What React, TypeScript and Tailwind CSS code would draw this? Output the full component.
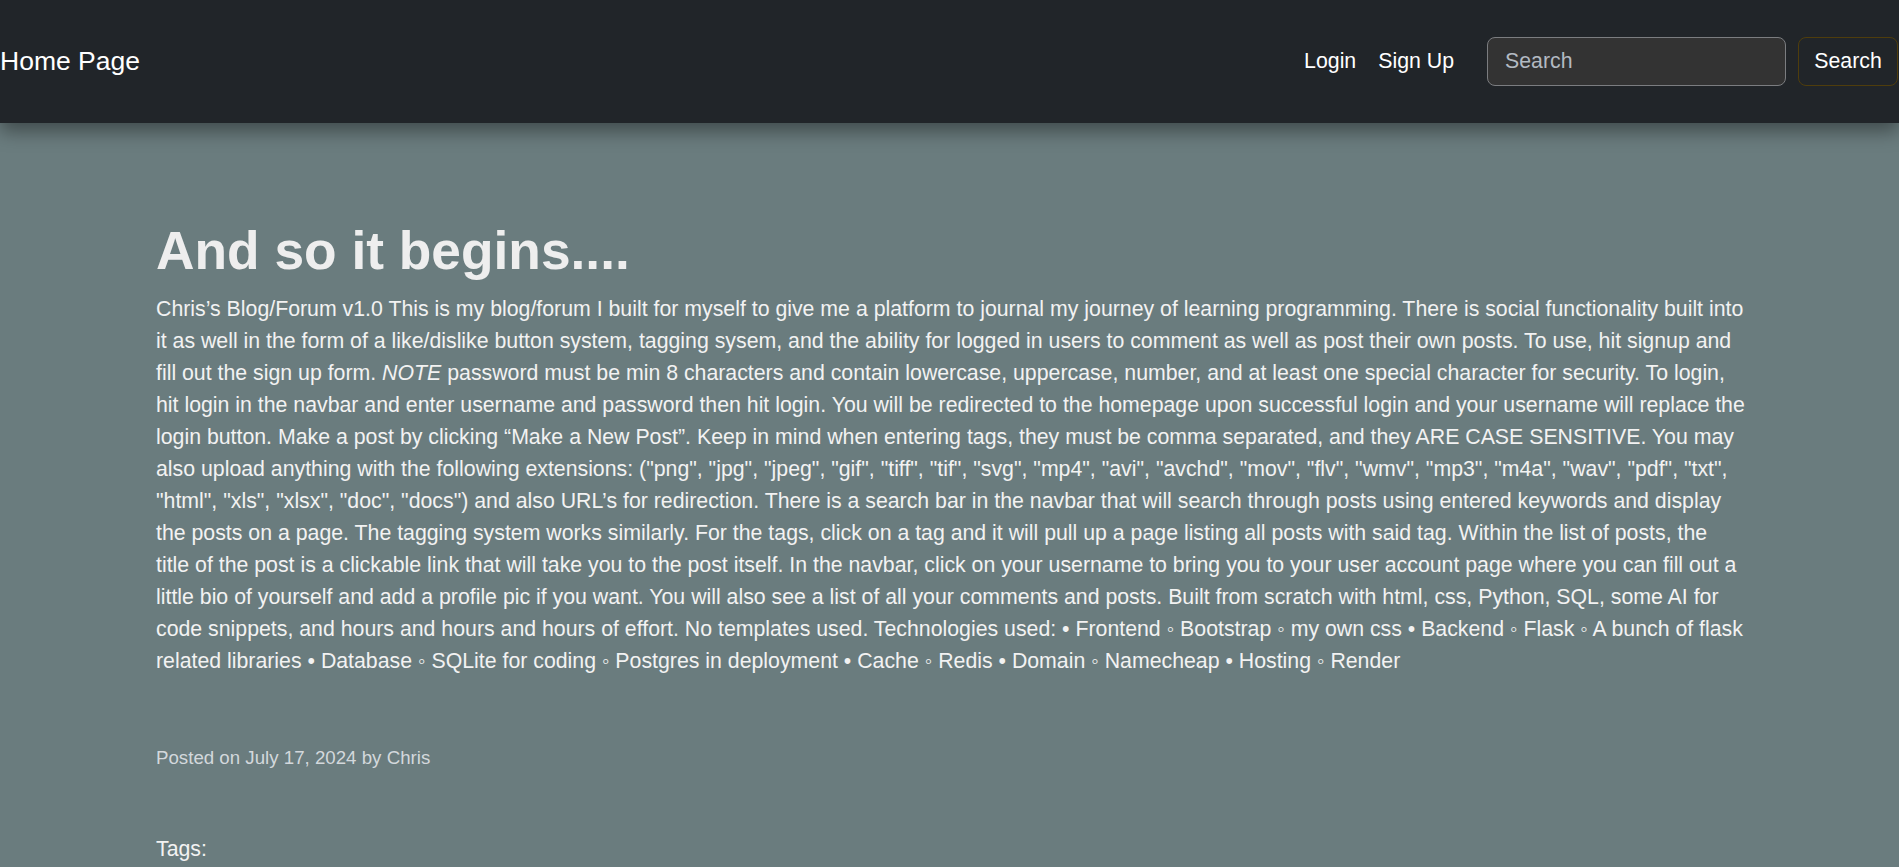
import React from 'react';

const body =
  'password must be min 8 characters and contain lowercase, uppercase, number, and at least one special character for security. To login, hit login in the navbar and enter username and password then hit login. You will be redirected to the homepage upon successful login and your username will replace the login button. Make a post by clicking “Make a New Post”. Keep in mind when entering tags, they must be comma separated, and they ARE CASE SENSITIVE. You may also upload anything with the following extensions: ("png", "jpg", "jpeg", "gif", "tiff", "tif", "svg", "mp4", "avi", "avchd", "mov", "flv", "wmv", "mp3", "m4a", "wav", "pdf", "txt", "html", "xls", "xlsx", "doc", "docs") and also URL’s for redirection. There is a search bar in the navbar that will search through posts using entered keywords and display the posts on a page. The tagging system works similarly. For the tags, click on a tag and it will pull up a page listing all posts with said tag. Within the list of posts, the title of the post is a clickable link that will take you to the post itself. In the navbar, click on your username to bring you to your user account page where you can fill out a little bio of yourself and add a profile pic if you want. You will also see a list of all your comments and posts. Built from scratch with html, css, Python, SQL, some AI for code snippets, and hours and hours and hours of effort. No templates used. Technologies used: • Frontend ◦ Bootstrap ◦ my own css • Backend ◦ Flask ◦ A bunch of flask related libraries • Database ◦ SQLite for coding ◦ Postgres in deployment • Cache ◦ Redis • Domain ◦ Namecheap • Hosting ◦ Render';

export default function App() {
  return (
    <div className="min-h-screen bg-[#6a7c7e] font-['Liberation_Sans',Arial,sans-serif]">
      {/* navbar */}
      <nav className="relative z-10 flex h-[123px] items-center justify-between bg-[#212529] shadow-[0_8px_18px_rgba(0,0,0,0.4)]">
        <a className="text-[26.5px] leading-none text-white">Home Page</a>
        <div className="flex items-center">
          <a className="text-[21.3px] text-white">Login</a>
          <a className="ml-[22px] text-[21.3px] text-white">Sign Up</a>
          <input
            type="text"
            placeholder="Search"
            className="ml-[33px] h-[49px] w-[299px] rounded-[8px] border border-[#7b7d80] bg-[#333333] px-[17px] text-[21.3px] text-white outline-none placeholder:text-[#b3bac2]"
          />
          <button className="ml-[12px] mr-[1px] h-[49px] w-[100px] rounded-[8px] border border-[#4f3d0c] text-[21.3px] text-white">
            Search
          </button>
        </div>
      </nav>

      {/* post */}
      <main className="pl-[156px] pr-[153px] pt-[96px] pb-[40px]">
        <h1 className="mb-[10px] text-[53.3px] leading-[64px] font-bold text-[#eeeeee]">And so it begins....</h1>
        <p className="text-[21.3px] leading-[32px] text-[#f2f2f2]">
          Chris’s Blog/Forum v1.0 This is my blog/forum I built for myself to give me a platform to journal my
          journey of learning programming. There is social functionality built into it as well in the form of a
          like/dislike button system, tagging sysem, and the ability for logged in users to comment as well as post
          their own posts. To use, hit signup and fill out the sign up form. <em>NOTE</em> {body}
        </p>
        <p className="mt-[67px] text-[18.7px] leading-[28px] text-[#d3d8dc]">Posted on July 17, 2024 by Chris</p>
        <p className="mt-[61px] text-[21.3px] leading-[32px] text-[#f2f2f2]">Tags:</p>
      </main>
    </div>
  );
}
